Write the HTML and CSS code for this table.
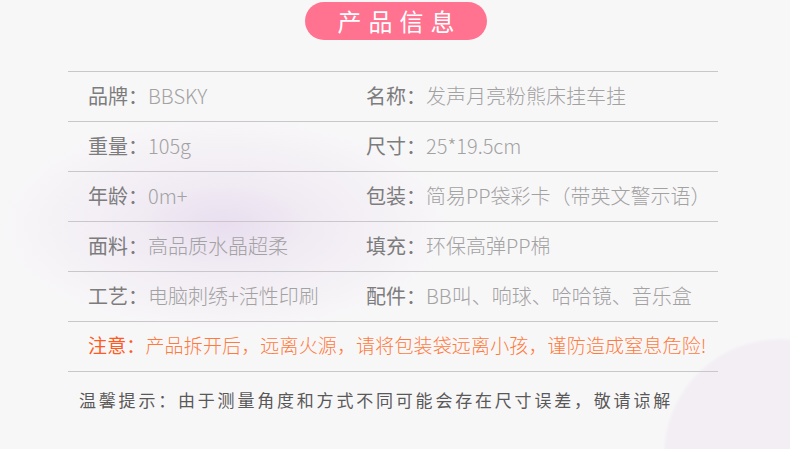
FILE: index.html
```html
<!DOCTYPE html>
<html lang="zh-CN">
<head>
<meta charset="utf-8">
<link rel="stylesheet" href="styles.css">
</head>
<body>
<div class="page">
  <header class="head">
    <div class="pill">产品信息</div>
  </header>
  <section class="table">
    <div class="row">
      <div class="cell first"><span class="lbl">品牌：</span><span class="val">BBSKY</span></div>
      <div class="cell"><span class="lbl">名称：</span><span class="val">发声月亮粉熊床挂车挂</span></div>
    </div>
    <div class="row">
      <div class="cell first"><span class="lbl">重量：</span><span class="val">105g</span></div>
      <div class="cell"><span class="lbl">尺寸：</span><span class="val">25*19.5cm</span></div>
    </div>
    <div class="row">
      <div class="cell first"><span class="lbl">年龄：</span><span class="val">0m+</span></div>
      <div class="cell"><span class="lbl">包装：</span><span class="val">简易PP袋彩卡（带英文警示语）</span></div>
    </div>
    <div class="row">
      <div class="cell first"><span class="lbl">面料：</span><span class="val">高品质水晶超柔</span></div>
      <div class="cell"><span class="lbl">填充：</span><span class="val">环保高弹PP棉</span></div>
    </div>
    <div class="row">
      <div class="cell first"><span class="lbl">工艺：</span><span class="val">电脑刺绣+活性印刷</span></div>
      <div class="cell"><span class="lbl">配件：</span><span class="val">BB叫、响球、哈哈镜、音乐盒</span></div>
    </div>
    <div class="row notice">
      <span class="nlbl">注意：</span><span class="nval">产品拆开后，远离火源，请将包装袋远离小孩，谨防造成窒息危险!</span>
    </div>
  </section>
  <p class="tip">温馨提示：由于测量角度和方式不同可能会存在尺寸误差，敬请谅解</p>
</div>
</body>
</html>
```
FILE: styles.css
```css
html, body {
  margin: 0;
  padding: 0;
}
body {
  width: 790px;
  height: 449px;
  overflow: hidden;
  background-color: #f8f7f8;
  background-image:
    radial-gradient(circle 118px at 780px 455px, #f2eef4 0, #f2eef4 96%, rgba(242,238,244,0) 100%),
    radial-gradient(ellipse 230px 110px at 225px 225px, rgba(232,221,239,0.95) 0, rgba(238,231,242,0.7) 40%, rgba(248,247,248,0) 100%);
  font-family: "Noto Sans CJK SC", "Noto Sans", sans-serif;
}
.page {
  display: flex;
  flex-direction: column;
}
.head {
  display: flex;
  justify-content: center;
  padding-top: 2px;
  padding-left: 2px;
}
.pill {
  width: 182px;
  height: 38px;
  border-radius: 19px;
  background: #ff7391;
  color: #fff;
  font-size: 24px;
  letter-spacing: 7px;
  text-indent: 7px;
  line-height: 38px;
  text-align: center;
}
.table {
  margin: 31px 0 0 68px;
  width: 650px;
  border-bottom: 1px solid #c9c7c9;
}
.row {
  display: grid;
  grid-template-columns: 298px 1fr;
  height: 49px;
  border-top: 1px solid #c9c7c9;
  align-items: center;
  font-size: 20px;
  padding-bottom: 3px;
  box-sizing: border-box;
  height: 50px;
}
.cell.first {
  padding-left: 20px;
}
.lbl {
  color: #7d7c7d;
}
.val {
  color: #a3a2a3;
  font-weight: 300;
}
.row.notice {
  display: block;
  padding-left: 20px;
  line-height: 46px;
  font-size: 19px;
  letter-spacing: 0.15px;
}
.nlbl {
  color: #ff5a22;
}
.nval {
  color: #ff7a3e;
  font-weight: 300;
}
.tip {
  margin: 15px 0 0 79px;
  font-size: 17px;
  letter-spacing: 2.8px;
  color: #5a595a;
}
```
